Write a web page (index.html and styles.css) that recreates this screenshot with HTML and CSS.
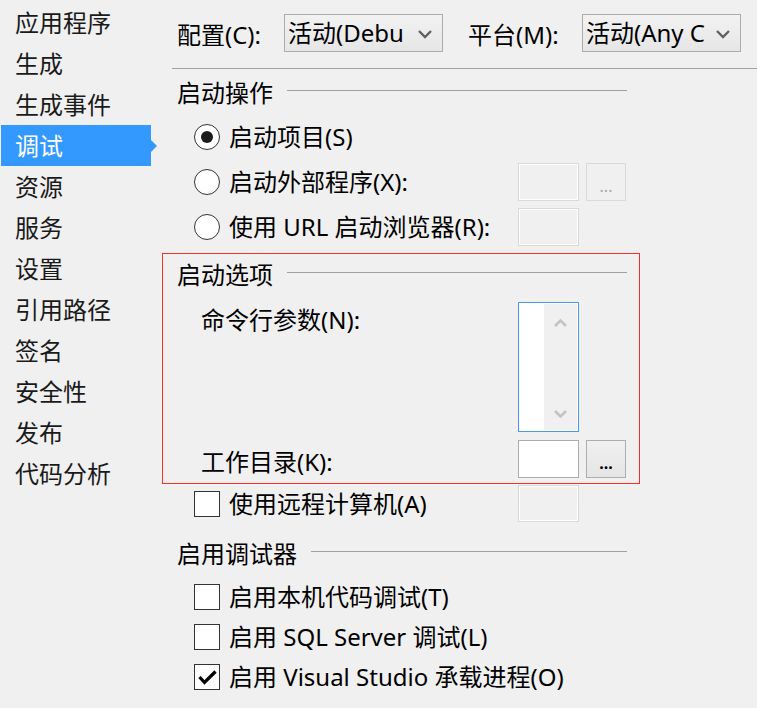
FILE: index.html
```html
<!DOCTYPE html>
<html lang="zh-CN">
<head>
<meta charset="utf-8">
<title>调试</title>
<link rel="stylesheet" href="styles.css">
</head>
<body>
<div class="app">
  <nav class="sidebar">
    <div class="nav-item">应用程序</div>
    <div class="nav-item">生成</div>
    <div class="nav-item">生成事件</div>
    <div class="nav-item active">调试</div>
    <div class="nav-item">资源</div>
    <div class="nav-item">服务</div>
    <div class="nav-item">设置</div>
    <div class="nav-item">引用路径</div>
    <div class="nav-item">签名</div>
    <div class="nav-item">安全性</div>
    <div class="nav-item">发布</div>
    <div class="nav-item">代码分析</div>
  </nav>
  <main class="content">
    <div class="toprow">
      <span class="top-label first">配置(C):</span>
      <div class="combo">
        <span class="combo-text">活动(Debu</span>
        <svg class="chev" width="14" height="10" viewBox="0 0 14 10"><path d="M1 2 L7 8 L13 2" fill="none" stroke="#606060" stroke-width="2.4"/></svg>
      </div>
      <span class="top-label second">平台(M):</span>
      <div class="combo">
        <span class="combo-text">活动(Any C</span>
        <svg class="chev" width="14" height="10" viewBox="0 0 14 10"><path d="M1 2 L7 8 L13 2" fill="none" stroke="#606060" stroke-width="2.4"/></svg>
      </div>
    </div>
    <div class="sep"></div>

    <div class="group-head"><span class="gh-text">启动操作</span><span class="rule"></span></div>
    <div class="opt-row tall">
      <span class="radio checked"></span><span class="opt-label">启动项目(S)</span>
    </div>
    <div class="opt-row tall">
      <span class="radio"></span><span class="opt-label">启动外部程序(X):</span>
      <span class="field disabled"></span><span class="browse disabled">...</span>
    </div>
    <div class="opt-row tall">
      <span class="radio"></span><span class="opt-label">使用 URL 启动浏览器(R):</span>
      <span class="field disabled"></span>
    </div>

    <section class="highlight-box">
      <div class="group-head inner"><span class="gh-text">启动选项</span><span class="rule"></span></div>
      <div class="box-row cmd">
        <span class="box-label">命令行参数(N):</span>
        <div class="multiline">
          <div class="ml-text"></div>
          <div class="ml-scroll">
            <svg width="13" height="10" viewBox="0 0 13 10"><path d="M1 8 L6.5 2.5 L12 8" fill="none" stroke="#c3c3c3" stroke-width="2.6"/></svg>
            <svg width="13" height="10" viewBox="0 0 13 10"><path d="M1 2 L6.5 7.5 L12 2" fill="none" stroke="#c3c3c3" stroke-width="2.6"/></svg>
          </div>
        </div>
      </div>
      <div class="box-row work">
        <span class="box-label">工作目录(K):</span>
        <span class="field"></span><span class="browse">...</span>
      </div>
    </section>

    <div class="opt-row remote">
      <span class="check"></span><span class="opt-label">使用远程计算机(A)</span>
      <span class="field disabled"></span>
    </div>

    <div class="group-head debug"><span class="gh-text">启用调试器</span><span class="rule"></span></div>
    <div class="opt-row chk first-chk">
      <span class="check"></span><span class="opt-label">启用本机代码调试(T)</span>
    </div>
    <div class="opt-row chk">
      <span class="check"></span><span class="opt-label">启用 SQL Server 调试(L)</span>
    </div>
    <div class="opt-row chk">
      <span class="check checked"><svg width="26" height="26" viewBox="0 0 26 26"><path d="M5.5 13 L10.5 18.5 L21.5 7.5" fill="none" stroke="#000" stroke-width="3.2"/></svg></span><span class="opt-label">启用 Visual Studio 承载进程(O)</span>
    </div>
  </main>
</div>
</body>
</html>
```

FILE: styles.css
```css
* { box-sizing: border-box; }
html, body {
  margin: 0;
  padding: 0;
  background: #f0f0f0;
}
body {
  width: 757px;
  height: 708px;
  overflow: hidden;
  font-family: "Noto Sans", "Noto Sans CJK SC", sans-serif;
  font-size: 24px;
  color: #000;
}
.app {
  display: flex;
  height: 708px;
}

/* sidebar */
.sidebar {
  width: 160px;
  flex: none;
  padding-top: 2px;
  display: flex;
  flex-direction: column;
}
.nav-item {
  position: relative;
  height: 41px;
  line-height: 41px;
  margin-left: 1px;
  width: 150px;
  padding-left: 14px;
  color: #1a1a1a;
  white-space: nowrap;
}
.nav-item.active {
  background: #3399ff;
  color: #fff;
}
.nav-item.active::after {
  content: "";
  position: absolute;
  right: -6px;
  top: 50%;
  margin-top: -6px;
  border-left: 6px solid #3399ff;
  border-top: 6px solid transparent;
  border-bottom: 6px solid transparent;
}

/* main */
.content {
  flex: none;
  width: 597px;
  min-width: 0;
  padding-top: 14px;
  display: flex;
  flex-direction: column;
}
.toprow {
  display: flex;
  align-items: center;
  height: 38px;
  padding-left: 17px;
}
.top-label {
  white-space: nowrap;
}
.top-label.first { width: 107px; }
.top-label.second { width: 114px; margin-left: 25px; }
.combo {
  width: 159px;
  height: 38px;
  border: 1px solid #acacac;
  background: linear-gradient(#f2f2f2, #e6e6e6);
  display: flex;
  align-items: center;
  padding-left: 3px;
  padding-right: 10px;
}
.combo-text {
  white-space: nowrap;
  line-height: 36px;
}
.chev {
  margin-left: auto;
  margin-top: 1px;
  flex: none;
}
.sep {
  margin-top: 16px;
  margin-left: 12px;
  height: 1px;
  background: #a0a0a0;
}

/* group headers */
.group-head {
  display: flex;
  align-items: center;
  height: 32px;
  margin-top: 8px;
  margin-bottom: 5px;
  padding-left: 17px;
  padding-right: 130px;
  white-space: nowrap;
}
.gh-text { line-height: 32px; }
.rule {
  flex: 1;
  height: 1px;
  background: #a0a0a0;
  margin-left: 14px;
  margin-bottom: 5px;
}
.group-head.inner {
  margin-top: 0;
  margin-bottom: 0;
  padding-left: 14px;
  padding-right: 12px;
}
.group-head.debug {
  margin-top: 15px;
  margin-bottom: 7px;
}

/* option rows */
.opt-row {
  display: grid;
  grid-template-columns: 26px minmax(0, 1fr) 61px 40px;
  column-gap: 7px;
  align-items: center;
  padding-left: 34px;
  padding-right: 131px;
  white-space: nowrap;
}
.opt-row.tall { height: 45px; }
.opt-row.remote { height: 39px; }
.opt-row.chk {
  height: 40px;
  grid-template-columns: 26px minmax(0, 1fr);
  padding-right: 0;
}
.opt-label {
  margin-left: 2px;
  line-height: 32px;
}
.radio {
  width: 26px;
  height: 26px;
  border: 1px solid #333;
  border-radius: 50%;
  background: #fff;
  display: flex;
  align-items: center;
  justify-content: center;
}
.radio.checked::after {
  content: "";
  width: 12px;
  height: 12px;
  border-radius: 50%;
  background: #1a1a1a;
}
.check {
  width: 26px;
  height: 26px;
  border: 1px solid #333;
  background: #fff;
  position: relative;
}
.check svg {
  position: absolute;
  left: -1px;
  top: -1px;
}

/* fields */
.field {
  grid-column: 3;
  width: 61px;
  height: 38px;
  border: 1px solid #acacac;
  background: #fff;
}
.field.disabled {
  border-color: #d9d9d9;
  background: #f0f0f0;
  box-shadow: inset 0 0 0 1px #fff;
}
.opt-row.remote .field { height: 37px; }
.browse {
  grid-column: 4;
  width: 40px;
  height: 38px;
  border: 1px solid #adadad;
  background: linear-gradient(#f0f0f0, #e5e5e5);
  text-align: center;
  font-size: 16px;
  font-weight: bold;
  line-height: 44px;
  color: #000;
}
.browse.disabled {
  border-color: #d9d9d9;
  background: #f0f0f0;
  color: #a8a8a8;
  font-weight: normal;
}

/* red highlight box */
.highlight-box {
  margin-top: 4px;
  margin-left: 2px;
  margin-right: 117px;
  border: 1px solid #f3312b;
  padding-top: 5px;
  padding-bottom: 5px;
}
.box-row {
  display: grid;
  grid-template-columns: minmax(0, 1fr) 61px 40px;
  column-gap: 7px;
  padding-left: 38px;
  padding-right: 13px;
  white-space: nowrap;
}
.box-row .field { grid-column: 2; }
.box-row .browse { grid-column: 3; }
.box-row.cmd {
  margin-top: 11px;
  align-items: start;
}
.box-row.cmd .box-label { line-height: 36px; }
.box-row.work {
  margin-top: 8px;
  height: 38px;
  align-items: center;
}
.box-row.work .box-label {
  line-height: 32px;
  padding-top: 5px;
}
.multiline {
  grid-column: 2;
  width: 61px;
  height: 130px;
  border: 1px solid #4a9ae6;
  background: #fff;
  display: flex;
}
.ml-text { width: 25px; }
.ml-scroll {
  width: 33px;
  margin-top: 1px;
  margin-bottom: 1px;
  background: #f0f0f0;
  display: flex;
  flex-direction: column;
  align-items: center;
  justify-content: space-between;
  padding: 14px 0 11px;
}
```
